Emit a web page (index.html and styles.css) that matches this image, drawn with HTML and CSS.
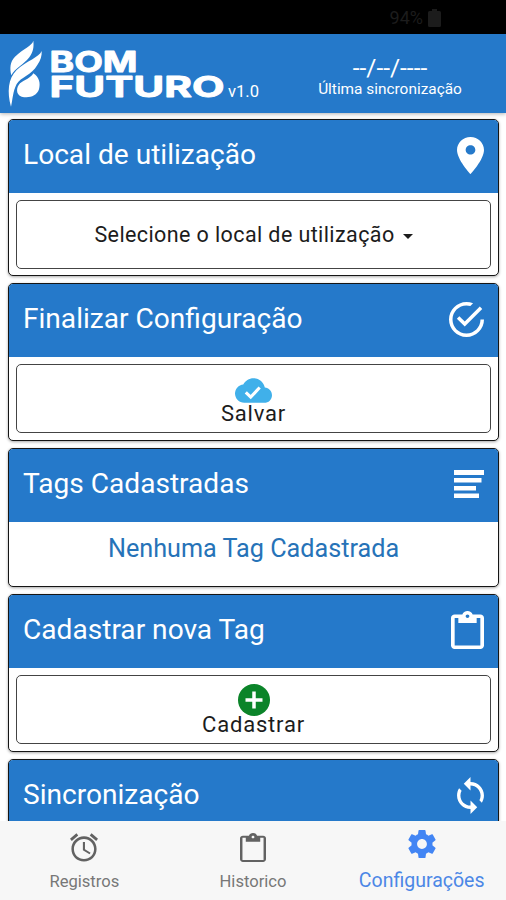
FILE: index.html
```html
<!DOCTYPE html>
<html lang="pt-BR">
<head>
<meta charset="utf-8">
<title>Bom Futuro</title>
<link rel="stylesheet" href="styles.css">
</head>
<body>
<div class="app">
  <div class="statusbar">
    <span>94%</span>
    <svg width="13" height="18" viewBox="0 0 13 18"><path d="M4 0h5v2h2.500q1.500 0 1.500 1.500V16.500q0 1.500-1.500 1.500H1.500Q0 18 0 16.500V3.500Q0 2 1.500 2H4z"/></svg>
  </div>
  <header class="topbar">
    <svg class="logo" width="226" height="79" viewBox="0 0 226 79">
      <g transform="translate(0 -34) scale(.3333)">
        <path d="M100 122C96 138 70 145 45 170C30 185 29 205 34 226C45 205 70 195 88 172C100 155 102 140 100 122z"/>
        <path d="M125 153C118 172 80 182 50 210C24 235 21 277 33 320C38 300 38 275 50 252C62 232 95 225 112 195C122 180 126 168 125 153z"/>
        <path d="M100 220C118 232 122 250 117 268C110 290 85 295 65 290C47 285 48 262 60 250C75 238 92 235 100 220z"/>
      </g>
      <text class="logo-text" x="49.500" y="38" textLength="88" lengthAdjust="spacingAndGlyphs">BOM</text>
      <text class="logo-text" x="49.500" y="62.700" textLength="175" lengthAdjust="spacingAndGlyphs">FUTURO</text>
    </svg>
    <span class="version">v1.0</span>
    <div class="sync">
      <div class="sync-date">--/--/----</div>
      <div class="sync-label">Última sincronização</div>
    </div>
  </header>
  <main class="content">
    <section class="card">
      <div class="card-head"><h2>Local de utilização</h2>
        <svg width="27" height="37" viewBox="96 32 320 448" preserveAspectRatio="none"><path d="M256 32c-88.004 0-160 70.557-160 156.801C96 306.400 256 480 256 480s160-173.600 160-291.199C416 102.557 344.004 32 256 32zm0 212.801c-31.996 0-57.144-24.645-57.144-56 0-31.357 25.147-56 57.144-56s57.144 24.643 57.144 56c0 31.355-25.148 56-57.144 56z"/></svg>
      </div>
      <button class="action select"><span>Selecione o local de utilização</span><i class="caret"></i></button>
    </section>
    <section class="card tall">
      <div class="card-head"><h2>Finalizar Configuração</h2>
        <svg width="35" height="35" viewBox="48 48 416 416"><path d="M170.718 216.482L141.600 245.600l93.600 93.600 208-208-29.118-29.118L235.200 279.918l-64.482-63.436zM422.400 256c0 91.518-74.883 166.400-166.400 166.400S89.600 347.518 89.600 256 164.482 89.600 256 89.600c15.600 0 31.200 2.082 45.764 6.241L334 62.600C310.082 53.241 283.082 48 256 48 141.600 48 48 141.600 48 256s93.600 208 208 208 208-93.600 208-208h-41.600z"/></svg>
      </div>
      <button class="action save">
        <svg class="cloud" width="37" height="25" viewBox="0 4 24 16"><path d="M19.350 10.040C18.670 6.590 15.640 4 12 4 9.110 4 6.600 5.640 5.350 8.040 2.340 8.360 0 10.910 0 14c0 3.310 2.690 6 6 6h13c2.760 0 5-2.240 5-5 0-2.640-2.050-4.780-4.650-4.960z"/><path class="mark" d="M7 13.200l3.200 3.100 5.800-6.200"/></svg>
        <span>Salvar</span>
      </button>
    </section>
    <section class="card short">
      <div class="card-head"><h2>Tags Cadastradas</h2>
        <svg width="30" height="29" viewBox="0 0 30 29"><path d="M0 0h30v5H0zM0 8h27.500v4.500H0zM0 16h22v4.500H0zM0 23.500h25v4.500H0z"/></svg>
      </div>
      <p class="empty">Nenhuma Tag Cadastrada</p>
    </section>
    <section class="card tall">
      <div class="card-head"><h2>Cadastrar nova Tag</h2>
        <svg width="33" height="38" viewBox="3 0 18 22" preserveAspectRatio="none"><path d="M19 2h-4.180C14.400.84 13.300 0 12 0c-1.300 0-2.400.84-2.820 2H5c-1.100 0-2 .9-2 2v16c0 1.100.9 2 2 2h14c1.100 0 2-.9 2-2V4c0-1.100-.9-2-2-2zm-7 0c.55 0 1 .45 1 1s-.45 1-1 1-1-.45-1-1 .45-1 1-1zm7 18H5V4h2v3h10V4h2v16z"/></svg>
      </div>
      <button class="action add">
        <svg width="32" height="32" viewBox="0 0 32 32"><circle cx="16" cy="16" r="16"/><path class="plus" d="M16 7.500v17M7.500 16h17"/></svg>
        <span>Cadastrar</span>
      </button>
    </section>
    <section class="card">
      <div class="card-head"><h2>Sincronização</h2>
        <svg width="27" height="37" viewBox="4 1 16 22"><path d="M12 4V1L8 5l4 4V6c3.310 0 6 2.690 6 6 0 1.010-.25 1.970-.7 2.800l1.460 1.460C19.540 15.030 20 13.570 20 12c0-4.420-3.580-8-8-8zm0 14c-3.310 0-6-2.690-6-6 0-1.010.25-1.970.7-2.800L5.240 7.740C4.460 8.970 4 10.430 4 12c0 4.420 3.580 8 8 8v3l4-4-4-4v3z"/></svg>
      </div>
    </section>
  </main>
  <nav class="tabs">
    <a class="tab">
      <svg width="28" height="29" viewBox="2 1.800 20 20.300"><path d="M22 5.720l-4.600-3.860-1.290 1.530 4.600 3.860L22 5.720zM7.880 3.390L6.600 1.860 2 5.710l1.290 1.530 4.590-3.850zM12.700 8H11.200v6l4.750 2.850.75-1.230-4-2.370V8zM12 4c-4.970 0-9 4.030-9 9s4.020 9 9 9c4.970 0 9-4.030 9-9s-4.030-9-9-9zm0 16.200c-3.980 0-7.200-3.220-7.200-7.200S8.020 5.800 12 5.800s7.200 3.220 7.200 7.200-3.220 7.200-7.200 7.200z"/></svg>
      <span>Registros</span>
    </a>
    <a class="tab">
      <svg width="26" height="29" viewBox="3 0 18 22" preserveAspectRatio="none"><path d="M19 2h-4.180C14.400.84 13.300 0 12 0c-1.300 0-2.400.84-2.820 2H5c-1.100 0-2 .9-2 2v16c0 1.100.9 2 2 2h14c1.100 0 2-.9 2-2V4c0-1.100-.9-2-2-2zm-7 0c.55 0 1 .45 1 1s-.45 1-1 1-1-.45-1-1 .45-1 1-1zm7.300 18.400H4.700V3.600H7v3h10v-3h2.300v16.800z"/></svg>
      <span>Historico</span>
    </a>
    <a class="tab active">
      <svg width="28" height="28" viewBox="2 2 20 20"><path d="M19.430 12.980c.04-.32.07-.64.07-.98s-.03-.66-.07-.98l2.110-1.650c.19-.15.24-.42.12-.64l-2-3.460c-.12-.22-.39-.3-.61-.22l-2.490 1c-.52-.4-1.080-.73-1.690-.98l-.38-2.650C14.460 2.180 14.250 2 14 2h-4c-.25 0-.46.18-.49.42l-.38 2.650c-.61.25-1.170.59-1.690.98l-2.490-1c-.23-.09-.49 0-.61.22l-2 3.460c-.13.22-.07.49.12.64l2.110 1.650c-.04.32-.07.65-.07.98s.03.66.07.98l-2.110 1.650c-.19.15-.24.42-.12.64l2 3.460c.12.22.39.3.61.22l2.490-1c.52.4 1.080.73 1.690.98l.38 2.650c.03.24.24.42.49.42h4c.25 0 .46-.18.49-.42l.38-2.650c.61-.25 1.170-.59 1.690-.98l2.490 1c.23.09.49 0 .61-.22l2-3.460c.12-.22.07-.49-.12-.64l-2.110-1.650zM12 15.500c-1.930 0-3.500-1.570-3.500-3.500s1.570-3.500 3.500-3.500 3.500 1.570 3.500 3.500-1.570 3.500-3.500 3.500z"/></svg>
      <span>Configurações</span>
    </a>
  </nav>
</div>
</body>
</html>
```
FILE: styles.css
```css
* { box-sizing: border-box; }
body { margin: 0; font-family: Roboto, "Liberation Sans", sans-serif; background: #fff; }
svg { display: block; flex: none; fill: currentColor; }
.app { width: 506px; height: 900px; display: flex; flex-direction: column; overflow: hidden; }

.statusbar { flex: none; height: 34px; padding: 1px 65px 0 0; background: #000; color: #1c1c1c; display: flex; justify-content: flex-end; align-items: center; gap: 5px; font-size: 18px; }

.topbar { flex: none; height: 79px; background: #2579ca; color: #fff; display: flex; box-shadow: 0 1px 4px rgba(0, 0, 0, .3); }
.logo-text { font-family: Inter, sans-serif; font-weight: 700; font-size: 28.500px; stroke: #fff; stroke-width: .9px; stroke-linejoin: round; }
.version { margin: 48px 0 0 2px; width: 32px; font-size: 16.600px; line-height: 20px; }
.sync { margin-left: 40px; width: 180px; padding-top: 22px; text-align: center; }
.sync-date { font-size: 24.500px; line-height: 24px; }
.sync-label { font-size: 15.400px; line-height: 18px; }

.content { flex: 1; min-height: 0; overflow: hidden; padding: 6px 7px 0 8px; display: flex; flex-direction: column; gap: 7px; }
.card { flex: none; height: 157px; border: 1px solid #151515; border-radius: 5px; background: #fff; overflow: hidden; box-shadow: 0 1px 3px rgba(0, 0, 0, .35); }
.tall { height: 158px; }
.short { height: 139px; }
.card-head { height: 73px; padding: 0 14px 3px; background: #2579ca; color: #fff; display: flex; align-items: center; justify-content: space-between; }
.card-head h2 { margin: -1px 0 0; font-size: 28.100px; font-weight: 400; line-height: 36px; }
.action { width: 475px; height: 69px; margin: 7px; padding: 0; border: 1px solid #444; border-radius: 5px; background: #fff; color: #1c1c1c; font: 22px/22px Roboto, sans-serif; letter-spacing: .8px; display: flex; flex-direction: column; align-items: center; justify-content: center; }
.select { flex-direction: row; gap: 8px; font-size: 21.500px; letter-spacing: .4px; }
.caret { margin-top: 4px; border: 5.500px solid transparent; border-top-color: #1c1c1c; border-bottom: 0; }
.save { padding-top: 5px; }
.cloud { color: #40b0ea; }
.mark { fill: none; stroke: #fff; stroke-width: 2; }
.add { padding-top: 1px; }
.add svg { color: #0b8429; margin-bottom: -2px; }
.plus { stroke: #fff; stroke-width: 3.500; }
.empty { margin: 12px 0 0; text-align: center; color: #2673b8; font-size: 25.200px; line-height: 30px; }

.tabs { position: relative; flex: none; height: 79px; background: #f7f7f7; color: #626262; display: flex; }
.tab { flex: 1; display: flex; flex-direction: column; align-items: center; padding-top: 12px; font-size: 16.600px; line-height: 20px; }
.tab span { margin-top: 10px; color: #777; }
.active { padding-top: 9px; color: #4285f4; font-size: 19.500px; }
.active span { margin-top: 13px; color: #4c87e6; }
```
